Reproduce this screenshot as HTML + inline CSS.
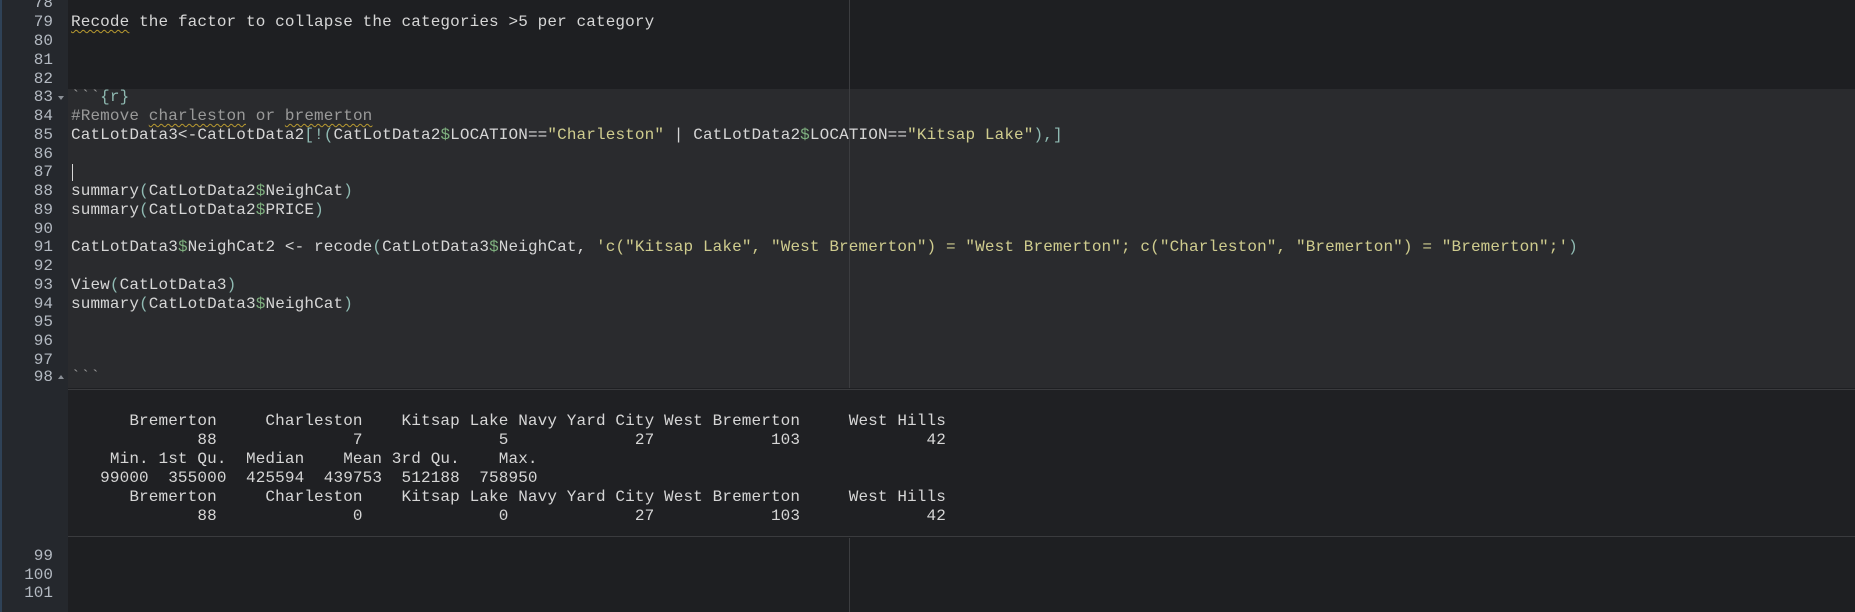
<!DOCTYPE html>
<html><head><meta charset="utf-8"><style>
html,body{margin:0;padding:0;width:1855px;height:612px;overflow:hidden;background:#1e1f22;}
body{position:relative;font-family:"Liberation Mono",monospace;font-size:16px;color:#d6d6d6;}
.gut{position:absolute;left:0;top:0;width:68px;height:612px;background:#25282d;}
.edge{position:absolute;left:0;top:0;width:2px;height:612px;background:#2f4257;}
.chunk{position:absolute;left:68px;top:89px;width:1787px;height:299px;background:#2a2b2e;}
.out{position:absolute;left:68px;top:389px;width:1787px;height:146px;background:#1f2023;border-top:1px solid #3a3b3e;border-bottom:1px solid #3a3b3e;}
.vl{position:absolute;left:849px;width:1px;background:#3c3d40;}
.n{position:absolute;left:0;width:53px;text-align:right;color:#b4bac2;height:19px;line-height:19px;}
.c{position:absolute;left:71px;white-space:pre;height:19px;line-height:19px;letter-spacing:0.12px;}
.p{color:#8fbab2}.d{color:#7fb07f}.s{color:#cfcc8e}.cm{color:#9a9a9a}.bt{color:#9a9a9a}
.u{text-decoration:underline wavy #b89a30;text-decoration-thickness:1px;text-underline-offset:3px}
.fd{position:absolute;left:58px;width:0;height:0;border-left:3px solid transparent;border-right:3px solid transparent;}
.cur{position:absolute;left:72px;top:164px;width:1px;height:17px;background:#d6d6d6}
</style></head><body>
<div class="gut"></div><div class="edge"></div>
<div class="chunk"></div>
<div class="out"></div>
<div class="vl" style="top:0;height:388px"></div>
<div class="vl" style="top:538px;height:74px"></div>

<div class="n" style="top:-6px">78</div>
<div class="n" style="top:13px">79</div><div class="c" style="top:13px"><span class="u">Recode</span> the factor to collapse the categories &gt;5 per category</div>
<div class="n" style="top:32px">80</div>
<div class="n" style="top:51px">81</div>
<div class="n" style="top:70px">82</div>
<div class="n" style="top:88px">83</div><div class="fd" style="top:96px;border-top:4px solid #8a8f96"></div><div class="c" style="top:88px"><span class="bt">&#96;&#96;&#96;</span><span class="p">{r}</span></div>
<div class="n" style="top:107px">84</div><div class="c cm" style="top:107px">#Remove <span class="u">charleston</span> or <span class="u">bremerton</span></div>
<div class="n" style="top:126px">85</div><div class="c" style="top:126px">CatLotData3&lt;-CatLotData2<span class="p">[!(</span>CatLotData2<span class="d">$</span>LOCATION==<span class="s">"Charleston"</span> | CatLotData2<span class="d">$</span>LOCATION==<span class="s">"Kitsap Lake"</span><span class="p">),]</span></div>
<div class="n" style="top:145px">86</div>
<div class="n" style="top:163px">87</div><div class="cur"></div>
<div class="n" style="top:182px">88</div><div class="c" style="top:182px">summary<span class="p">(</span>CatLotData2<span class="d">$</span>NeighCat<span class="p">)</span></div>
<div class="n" style="top:201px">89</div><div class="c" style="top:201px">summary<span class="p">(</span>CatLotData2<span class="d">$</span>PRICE<span class="p">)</span></div>
<div class="n" style="top:220px">90</div>
<div class="n" style="top:238px">91</div><div class="c" style="top:238px">CatLotData3<span class="d">$</span>NeighCat2 &lt;- recode<span class="p">(</span>CatLotData3<span class="d">$</span>NeighCat, <span class="s">'c("Kitsap Lake", "West Bremerton") = "West Bremerton"; c("Charleston", "Bremerton") = "Bremerton";'</span><span class="p">)</span></div>
<div class="n" style="top:257px">92</div>
<div class="n" style="top:276px">93</div><div class="c" style="top:276px">View<span class="p">(</span>CatLotData3<span class="p">)</span></div>
<div class="n" style="top:295px">94</div><div class="c" style="top:295px">summary<span class="p">(</span>CatLotData3<span class="d">$</span>NeighCat<span class="p">)</span></div>
<div class="n" style="top:313px">95</div>
<div class="n" style="top:332px">96</div>
<div class="n" style="top:351px">97</div>
<div class="n" style="top:368px">98</div><div class="fd" style="top:375px;border-bottom:4px solid #8a8f96"></div><div class="c bt" style="top:368px">&#96;&#96;&#96;</div>

<div class="c" style="top:412px">      Bremerton     Charleston    Kitsap Lake Navy Yard City West Bremerton     West Hills</div>
<div class="c" style="top:431px">             88              7              5             27            103             42</div>
<div class="c" style="top:450px">    Min. 1st Qu.  Median    Mean 3rd Qu.    Max.</div>
<div class="c" style="top:469px">   99000  355000  425594  439753  512188  758950</div>
<div class="c" style="top:488px">      Bremerton     Charleston    Kitsap Lake Navy Yard City West Bremerton     West Hills</div>
<div class="c" style="top:507px">             88              0              0             27            103             42</div>

<div class="n" style="top:547px">99</div>
<div class="n" style="top:566px">100</div>
<div class="n" style="top:584px">101</div>
</body></html>
